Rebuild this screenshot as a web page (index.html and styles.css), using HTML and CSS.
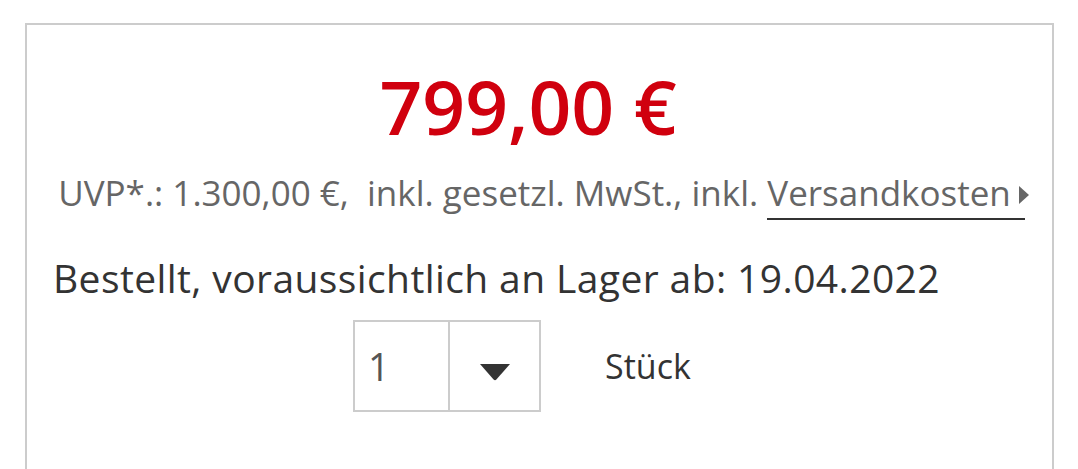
FILE: index.html
```html
<!DOCTYPE html>
<html lang="de">
<head>
  <meta charset="UTF-8">
  <meta name="viewport" content="width=device-width, initial-scale=1">
  <title>Preis</title>
  <link rel="stylesheet" href="styles.css">
</head>
<body>
  <div class="buybox">
    <div class="price">799,00 €</div>
    <div class="price-info">
      UVP*.: 1.300,00 €,&nbsp; inkl. gesetzl. MwSt., inkl. <a href="#" class="shipping-link">Versandkosten</a><span class="arrow"></span>
    </div>
    <div class="delivery">Bestellt, voraussichtlich an Lager ab: 19.04.2022</div>
    <div class="qty-row">
      <div class="qty-select">
        <span class="qty-value">1</span>
        <span class="qty-toggle">
          <svg width="30" height="17" viewBox="0 0 30 17"><path d="M0 0 L30 0 L16.4 15.6 Q15 17 13.6 15.6 Z" fill="#333"/></svg>
        </span>
      </div>
      <span class="qty-unit">Stück</span>
    </div>
  </div>
</body>
</html>
```

FILE: styles.css
```css
html, body {
  margin: 0;
  padding: 0;
  background: #fff;
  overflow: hidden;
}
body {
  font-family: "Open Sans", "Liberation Sans", sans-serif;
  color: #333;
}
.buybox {
  margin: 23px 24px 0 25px;
  border: 2px solid #ccc;
  border-bottom: none;
  min-height: 520px;
  padding: 37px 26px 0 26px;
}
.price {
  font-size: 75px;
  font-weight: 600;
  line-height: 89px;
  color: #d0000e;
  text-align: center;
  padding-right: 23px;
}
.price-info {
  margin: 19px -24px 0 -16px;
  font-size: 35px;
  line-height: 46px;
  color: #666;
  text-align: center;
  white-space: nowrap;
}
.shipping-link {
  color: #666;
  text-decoration: none;
  border-bottom: 2px solid #333;
  padding: 0 14px 2px 0;
}
.arrow {
  display: inline-block;
  width: 0;
  height: 0;
  border-top: 9px solid transparent;
  border-bottom: 9px solid transparent;
  border-left: 10px solid #666;
  margin-left: -6px;
  vertical-align: 2px;
}
.delivery {
  margin-top: 36px;
  font-size: 39px;
  letter-spacing: 0.4px;
  line-height: 52px;
}
.qty-row {
  display: flex;
  align-items: center;
  justify-content: center;
  gap: 64px;
  margin-top: 16px;
  padding-right: 35px;
}
.qty-select {
  display: flex;
  border: 2px solid #ccc;
  height: 88px;
}
.qty-value {
  width: 95px;
  padding-left: 13px;
  box-sizing: border-box;
  font-size: 38px;
  line-height: 88px;
  color: #555;
  border-right: 2px solid #ccc;
}
.qty-toggle {
  width: 89px;
  display: flex;
  align-items: center;
  justify-content: center;
  padding-top: 12px;
  box-sizing: border-box;
}
.qty-unit {
  font-size: 34px;
}
```
